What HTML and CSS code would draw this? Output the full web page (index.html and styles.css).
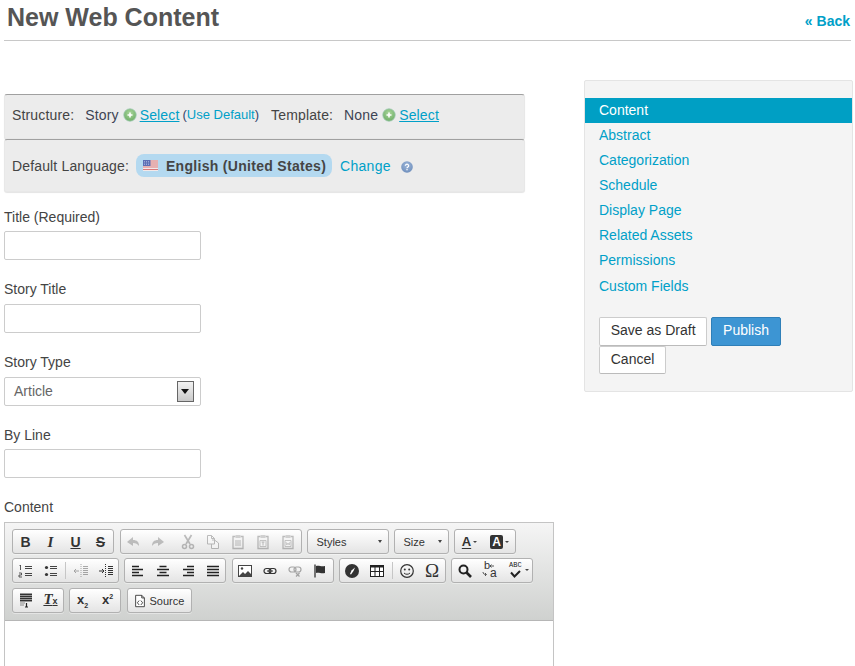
FILE: index.html
```html
<!DOCTYPE html>
<html lang="en">
<head>
<meta charset="utf-8">
<title>New Web Content</title>
<link rel="stylesheet" href="styles.css">
</head>
<body>
<svg class="defs" width="0" height="0" aria-hidden="true">
  <defs>
    <radialGradient id="gp" cx="50%" cy="35%" r="65%"><stop offset="0" stop-color="#a9d69b"/><stop offset="1" stop-color="#6fae66"/></radialGradient>
    <radialGradient id="gh" cx="50%" cy="35%" r="65%"><stop offset="0" stop-color="#9db6d8"/><stop offset="1" stop-color="#6f8fbd"/></radialGradient>
    <symbol id="plus" viewBox="0 0 14 14"><circle cx="7" cy="7" r="6.2" fill="url(#gp)" stroke="#9cc8b0" stroke-width=".8"/><path d="M7 4.500v5M4.500 7h5" stroke="#fff" stroke-width="1.600"/></symbol>
  </defs>
</svg>
<div class="page">
  <header class="head">
    <h1>New Web Content</h1>
    <a class="back" href="#">« Back</a>
  </header>
  <div class="columns">
    <main class="form">
      <div class="bar bar-a">
        <span class="k">Structure:</span><span class="v">Story</span>
        <svg class="plus" width="14" height="14"><use href="#plus"/></svg>
        <a class="u" href="#">Select</a>
        <span class="use">(<a href="#">Use Default</a>)</span>
        <span class="k k2">Template:</span><span class="v">None</span>
        <svg class="plus" width="14" height="14"><use href="#plus"/></svg>
        <a class="u" href="#">Select</a>
      </div>
      <div class="bar bar-b">
        <span class="k kl">Default Language:</span>
        <span class="chip">
          <svg class="flag" width="15" height="11" viewBox="0 0 15 11"><rect width="15" height="11" fill="#f3e9e9"/><path d="M0 1h15M0 3h15M0 5h15M0 7h15M0 9.500h15" stroke="#d9787a" stroke-width="1.100"/><rect width="7.500" height="6" fill="#5d6fb5"/><path d="M1 1.500h6M1 3h6M1 4.500h6" stroke="#c6cdec" stroke-width=".6" stroke-dasharray="1 1"/></svg>
          <b>English (United States)</b>
        </span>
        <a class="chg" href="#">Change</a>
        <svg class="help" width="12" height="12" viewBox="0 0 12 12"><circle cx="6" cy="6" r="5.800" fill="url(#gh)"/><path d="M4.300 4.700a1.700 1.500 0 1 1 2.600 1.300c-.6.400-.9.600-.9 1.200" fill="none" stroke="#fff" stroke-width="1.200"/><rect x="5.400" y="8" width="1.200" height="1.300" fill="#fff"/></svg>
      </div>

      <div class="field f1"><label>Title (Required)</label><input class="inp" type="text"></div>
      <div class="field"><label>Story Title</label><input class="inp" type="text"></div>
      <div class="field">
        <label>Story Type</label>
        <div class="inp sel"><span>Article</span><i class="arrow"></i></div>
      </div>
      <div class="field"><label>By Line</label><input class="inp" type="text"></div>
      <div class="field last"><label>Content</label></div>

      <div class="editor">
        <div class="toolbar">
          <div class="tbrow">
            <div class="grp pad">
              <span class="b"><b class="t">B</b></span>
              <span class="b"><i class="t serif">I</i></span>
              <span class="b"><u class="t">U</u></span>
              <span class="b"><s class="t">S</s></span>
            </div>
            <div class="grp off">
              <span class="b"><svg viewBox="0 0 16 16"><path d="M2 8l6-5v3c4 0 6 2 6 6-1.500-2-3-3-6-3v3z" fill="#444"/></svg></span>
              <span class="b"><svg viewBox="0 0 16 16"><path d="M14 8L8 3v3c-4 0-6 2-6 6 1.500-2 3-3 6-3v3z" fill="#444"/></svg></span>
              <span class="sep blank"></span>
              <span class="b"><svg viewBox="0 0 16 16"><path d="M4.500 1l5.500 9M11.500 1L6 10" stroke="#333" stroke-width="1.700" fill="none"/><circle cx="4.500" cy="12.500" r="2" fill="none" stroke="#333" stroke-width="1.500"/><circle cx="11.500" cy="12.500" r="2" fill="none" stroke="#333" stroke-width="1.500"/></svg></span>
              <span class="b"><svg viewBox="0 0 16 16"><path d="M2.500 1.500h4l3 3V10h-7zM6.500 1.500v3h3M7 6h2.500l4 3v5.500H6.500V10" fill="#fff" stroke="#333"/></svg></span>
              <span class="b"><svg viewBox="0 0 16 16"><path d="M5.500 2.500H3v12h10v-12h-2.500" fill="none" stroke="#333" stroke-width="1.300"/><rect x="5.500" y="1" width="5" height="3" fill="#777"/><path d="M5 7h6M5 9h6M5 11h6" stroke="#333"/></svg></span>
              <span class="b"><svg viewBox="0 0 16 16"><path d="M5.500 2.500H3v12h10v-12h-2.500" fill="none" stroke="#333" stroke-width="1.300"/><rect x="5.500" y="1" width="5" height="3" fill="#777"/><path d="M5 6.500h6v6H5z" fill="#fff" stroke="#333" stroke-width=".8"/><path d="M6.500 8h3M8 8v3.500" stroke="#333"/></svg></span>
              <span class="b"><svg viewBox="0 0 16 16"><path d="M5.500 2.500H3v12h10v-12h-2.500" fill="none" stroke="#333" stroke-width="1.300"/><rect x="5.500" y="1" width="5" height="3" fill="#777"/><path d="M5 6.500h6v6H5z" fill="#fff" stroke="#333" stroke-width=".8"/><path d="M6 8l.8 3 1.200-2 1.200 2 .8-3" stroke="#333" stroke-width=".7" fill="none"/></svg></span>
            </div>
            <div class="grp combo c-styles"><span>Styles</span><i class="caret"></i></div>
            <div class="grp combo c-size"><span>Size</span><i class="caret"></i></div>
            <div class="grp">
              <span class="b wide"><u class="t col">A</u><i class="caret small"></i></span>
              <span class="b wide"><b class="t colbg">A</b><i class="caret small"></i></span>
            </div>
          </div>
          <div class="tbrow">
            <div class="grp">
              <span class="b"><svg viewBox="0 0 16 16"><path d="M7 3.500h7M7 5.500h7M7 10.500h7M7 12.500h7" stroke="#444"/><path d="M2.500 2v5M1.500 3l1-1M1 10h2.500v2H1v2h3" stroke="#333" fill="none" stroke-width=".8"/></svg></span>
              <span class="b"><svg viewBox="0 0 16 16"><path d="M7 3.500h7M7 5.500h7M7 10.500h7M7 12.500h7" stroke="#444"/><circle cx="3.500" cy="4.500" r="1.600" fill="#333"/><circle cx="3.500" cy="11.500" r="1.600" fill="#333"/></svg></span>
              <span class="sep"></span>
              <span class="b faint"><svg viewBox="0 0 16 16"><path d="M8 1v14" stroke="#333" stroke-dasharray="1 1"/><path d="M10 3.500h5M10 5.500h5M10 7.500h5M10 9.500h5M10 11.500h5" stroke="#333"/><path d="M1 8h5M3 6l-2 2 2 2" stroke="#333" fill="none"/></svg></span>
              <span class="b"><svg viewBox="0 0 16 16"><path d="M7.500 1v14" stroke="#333" stroke-dasharray="1 1"/><path d="M10 3.500h5M10 5.500h5M10 7.500h5M10 9.500h5M10 11.500h5" stroke="#333"/><path d="M1 8h5M4 6l2 2-2 2" stroke="#333" fill="none"/></svg></span>
            </div>
            <div class="grp pad">
              <span class="b"><svg viewBox="0 0 16 16"><path d="M2 3.500h7M2 6.500h11M2 9.500h7M2 12.500h11" stroke="#222" stroke-width="1.600"/></svg></span>
              <span class="b"><svg viewBox="0 0 16 16"><path d="M4.500 3.500h7M2 6.500h12M4.500 9.500h7M2 12.500h12" stroke="#222" stroke-width="1.600"/></svg></span>
              <span class="b"><svg viewBox="0 0 16 16"><path d="M7 3.500h7M3 6.500h11M7 9.500h7M3 12.500h11" stroke="#222" stroke-width="1.600"/></svg></span>
              <span class="b"><svg viewBox="0 0 16 16"><path d="M2 3.500h12M2 6.500h12M2 9.500h12M2 12.500h12" stroke="#222" stroke-width="1.600"/></svg></span>
            </div>
            <div class="grp">
              <span class="b"><svg viewBox="0 0 16 16"><rect x="1.500" y="2.500" width="13" height="11" fill="#fff" stroke="#444"/><path d="M2 13l4-4 2 2 3-3 3 3v2z" fill="#444"/><circle cx="5" cy="5.500" r="1.200" fill="#444"/></svg></span>
              <span class="b"><svg viewBox="0 0 16 16"><rect x="2" y="5.500" width="7" height="5" rx="2.500" fill="none" stroke="#333" stroke-width="1.200"/><rect x="7" y="5.500" width="7" height="5" rx="2.500" fill="none" stroke="#333" stroke-width="1.200"/><path d="M5 8h6" stroke="#333"/></svg></span>
              <span class="b faint"><svg viewBox="0 0 16 16"><rect x="2" y="4" width="7" height="5" rx="2.500" fill="none" stroke="#333" stroke-width="1.200"/><rect x="7" y="4" width="7" height="5" rx="2.500" fill="none" stroke="#333" stroke-width="1.200"/><path d="M9 10l3.500 3.500M12.500 10L9 13.500" stroke="#333" stroke-width="1.300"/></svg></span>
              <span class="b"><svg viewBox="0 0 16 16"><path d="M3 1.500v13" stroke="#555" stroke-width="1.600"/><path d="M4 3c3-1 5 1 9 0v7c-4 1-6-1-9 0z" fill="#333"/></svg></span>
            </div>
            <div class="grp pad">
              <span class="b"><svg viewBox="0 0 16 16"><circle cx="8" cy="8" r="7" fill="#333"/><path d="M11 4.500L7.500 7.500 6 11l1 .5 2.500-3.500 1.500-3.500z" fill="#fff"/></svg></span>
              <span class="b"><svg viewBox="0 0 16 16"><rect x="1.500" y="2.500" width="13" height="11" fill="#fff" stroke="#222"/><path d="M1.500 3.500h13" stroke="#222" stroke-width="2"/><path d="M1.500 8.500h13M6 3.500v10M10.500 3.500v10" stroke="#222"/></svg></span>
              <span class="sep"></span>
              <span class="b"><svg viewBox="0 0 16 16"><circle cx="8" cy="8" r="6.300" fill="none" stroke="#333" stroke-width="1.200"/><circle cx="5.800" cy="6.500" r="1" fill="#333"/><circle cx="10.200" cy="6.500" r="1" fill="#333"/><path d="M5 10c1.500 1.700 4.500 1.700 6 0" fill="none" stroke="#333"/></svg></span>
              <span class="b"><b class="t omega">Ω</b></span>
            </div>
            <div class="grp">
              <span class="b"><svg viewBox="0 0 16 16"><circle cx="6.500" cy="6.500" r="4" fill="none" stroke="#222" stroke-width="2"/><path d="M9.500 9.500l4.500 4.500" stroke="#222" stroke-width="2.600"/></svg></span>
              <span class="b rep"><b>b</b><svg class="rarrow" viewBox="0 0 16 16"><path d="M9 4h4M10.500 2.500L9 4l1.500 1.500M2 10c0 1.500 1 2.500 3 2.500M4 11l1.500 1.500L4 14" fill="none" stroke="#444" stroke-width=".9"/></svg><b class="a">a</b></span>
              <span class="b wide spell"><span class="abc">ABC</span><svg viewBox="0 0 16 16"><path d="M3 9.500l3.500 4L12 8" fill="none" stroke="#222" stroke-width="2"/></svg><i class="caret small"></i></span>
            </div>
          </div>
          <div class="tbrow">
            <div class="grp">
              <span class="b"><svg viewBox="0 0 16 16"><rect x="2" y="1" width="12" height="9" fill="#999"/><path d="M2 2.500h12M2 4.500h12M2 6.500h12M2 8.500h12" stroke="#333"/><path d="M2 11h5M2 13h4" stroke="#888"/><path d="M7 15h3M8.500 11v4" stroke="#222" stroke-width="1.200"/></svg></span>
              <span class="b"><i class="t serif tx">T<small>x</small></i></span>
            </div>
            <div class="grp pad">
              <span class="b"><b class="t sc">x<sub>2</sub></b></span>
              <span class="b"><b class="t sc">x<sup>2</sup></b></span>
            </div>
            <div class="grp source">
              <svg viewBox="0 0 16 16"><path d="M3 1.500h7l3 3v10H3z" fill="#fff" stroke="#333"/><path d="M10 1.500v3h3" fill="none" stroke="#333"/><path d="M7 7.500L5 10l2 2.500M9 7.500l2 2.500-2 2.500" fill="none" stroke="#333"/></svg>
              <span>Source</span>
            </div>
          </div>
        </div>
        <div class="area"></div>
      </div>
    </main>

    <aside class="side">
      <nav class="nav">
        <a class="on" href="#">Content</a>
        <a href="#">Abstract</a>
        <a href="#">Categorization</a>
        <a href="#">Schedule</a>
        <a href="#">Display Page</a>
        <a href="#">Related Assets</a>
        <a href="#">Permissions</a>
        <a class="lastlink" href="#">Custom Fields</a>
      </nav>
      <div class="actions">
        <button class="btn" type="button">Save as Draft</button>
        <button class="btn primary" type="button">Publish</button>
        <button class="btn" type="button">Cancel</button>
      </div>
    </aside>
  </div>
</div>
</body>
</html>
```
FILE: styles.css
```css
* { box-sizing: border-box; }
html, body { margin: 0; height: 666px; overflow: hidden; background: #fff; }
body { font: 14px/20px "Liberation Sans", Arial, sans-serif; color: #555; }
a { color: #00a0c8; text-decoration: none; }
.defs { position: absolute; }
.page { padding: 0 4px; }

.head { display: flex; justify-content: space-between; height: 41px; border-bottom: 1px solid #c8c8c8; }
h1 { margin: 0 0 0 3px; font-size: 25px; line-height: 34px; font-weight: bold; color: #555; }
.back { font-weight: bold; line-height: 20px; margin-top: 11px; margin-right: 1px; }

.columns { display: flex; align-items: flex-start; margin-right: -4px; }
.form { flex: none; width: 550px; padding-top: 53px; }

.bar { width: 521px; background: #ececec; border-radius: 3px; border: 1px solid #e8e8e8; border-top-color: #a0a0a0; padding-left: 7px; display: flex; align-items: center; box-shadow: 0 1px 1px #e4e4e4; color: #444; letter-spacing: .15px; }
.bar-a { height: 45px; padding-bottom: 4px; }
.bar-b { height: 53px; padding-bottom: 0; }
.k { margin-right: 11px; }
.kl { margin-right: 12px; }
.k2 { margin-left: 12px; }
.plus { margin: 1px 3px 0 4px; }
.v { color: #3d4454; }
.u { text-decoration: underline; }
.use { font-size: 13px; margin-left: 3px; letter-spacing: 0; color: #33456b; }
.chip { display: flex; align-items: center; height: 23px; width: 196px; margin-left: -5px; padding-left: 7px; background: #b4d9f0; border-radius: 8px; }
.chip b { margin-left: 8px; color: #454545; letter-spacing: .3px; white-space: nowrap; }
.chg { margin-left: 8px; letter-spacing: .3px; }
.help { margin-left: 10px; margin-top: 3px; }

.field { display: flex; flex-direction: column; align-items: flex-start; margin-top: 19.250px; color: #444; }
.field.f1 { margin-top: 14.500px; }
.field label { line-height: 20px; margin-bottom: 4.500px; }
.inp { width: 197px; height: 29px; border: 1px solid #ccc; border-radius: 2px; background: #fff; padding: 0; margin: 0; display: block; }
.sel { display: flex; align-items: center; justify-content: space-between; padding: 0 6px 0 9px; color: #666; }
.arrow { width: 17px; height: 21px; border: 1px solid #666; background: linear-gradient(#f2f2f2, #c9c9c9); position: relative; }
.arrow::after { content: ""; position: absolute; left: 3px; top: 7px; border: 4px solid transparent; border-top: 5px solid #111; border-bottom: 0; }
.field.last { height: 20px; margin-top: 19px; }
.last label { margin: 0; }

.editor { width: 550px; margin-top: 4.750px; border: 1px solid #c4c4c4; border-bottom: 0; }
.toolbar { height: 98px; background: linear-gradient(#f5f5f5, #cfd1cf); border-bottom: 1px solid #b6b6b6; padding: 6px 7px 0; display: flex; flex-direction: column; gap: 4px; }
.tbrow { display: flex; gap: 5px; height: 25.400px; }
.grp { display: flex; align-items: center; height: 25px; border: 1px solid #b1b1b1; border-radius: 3px; background: linear-gradient(#fff, #e4e4e4); box-shadow: 0 1px 0 #fff6; color: #333; }
.pad { margin-right: .5px; }
.b { position: relative; width: 25px; height: 23px; display: flex; align-items: center; justify-content: center; flex: none; }
.b svg { width: 16px; height: 16px; display: block; }
.off .b { opacity: .3; }
.faint { opacity: .4; }
.sep { width: 1px; height: 17px; margin: 0 2px; background: #c6c6c6; flex: none; }
.sep.blank { background: transparent; }
.t { font-style: normal; font-size: 14px; line-height: 16px; color: #333; }
b.t, u.t, s.t { font-weight: bold; }
.serif { font-family: "Liberation Serif", serif; font-weight: bold; font-style: italic; font-size: 15px; }
b.omega { font-family: "Liberation Serif", serif; font-size: 19px; font-weight: normal; }
.combo { justify-content: space-between; padding: 0 6px 0 9px; font-size: 11px; }
.c-styles { width: 82px; }
.c-size { width: 55px; }
.caret { width: 0; height: 0; border: 2.500px solid transparent; border-top: 3px solid #444; border-bottom: 0; }
.small { border-width: 2px; border-top-width: 2px; border-bottom: 0; margin-left: 2px; }
.wide { width: 30px; }
.col { font-size: 13px; text-underline-offset: 2px; }
.colbg { background: #333; color: #fff; font-size: 12px; width: 13px; height: 14px; line-height: 14px; text-align: center; border-radius: 2px; }
.tx small { font-size: 9px; font-family: "Liberation Sans", sans-serif; font-style: normal; }
.tx { text-decoration: underline; }
.sc { font-size: 13px; }
.sc sub, .sc sup { font-size: 7px; line-height: 0; }
.rep { font-size: 11px; color: #333; }
.rep b { position: absolute; font-weight: normal; }
.rep b:first-child { left: 7px; top: 0; font-size: 11px; line-height: 12px; }
.rep .a { left: 13px; top: 8px; font-size: 12px; line-height: 12px; }
.rep .rarrow { position: absolute; left: 4px; top: 3px; }
.spell { justify-content: flex-start; padding-left: 8px; }
.spell svg { position: absolute; left: 6px; top: 4px; }
.abc { position: absolute; left: 7px; top: 1px; font: 7px/11px "Liberation Mono", monospace; color: #222; }
.spell .caret { position: absolute; right: 3px; top: 10px; }
.source { width: 65px; padding: 1px 5px 0; font-size: 11px; gap: 3px; }
.source svg { width: 14px; height: 14px; flex: none; }
.area { height: 60px; background: #fff; }

.side { flex: none; width: 269px; margin-left: 30px; margin-top: 39px; height: 312px; background: #f4f4f4; border: 1px solid #e4e4e4; border-radius: 2px; padding-top: 17px; }
.nav { display: flex; flex-direction: column; }
.nav a { height: 25px; line-height: 25px; padding-left: 14px; }
.nav a.on { background: #009fc4; color: #fff; }
.nav a.lastlink { margin-top: 1px; }
.actions { display: flex; flex-wrap: wrap; column-gap: 4px; padding: 18px 14px 0; }
.btn { height: 28.500px; padding: 0 10.750px 2px; border: 1px solid #ccc; border-bottom-color: #bbb; border-radius: 2px; background: #fff; font: 14px "Liberation Sans", Arial, sans-serif; color: #333; }
.primary { background: #3d95d3; border-color: #2f7fb8; color: #fff; }
```
